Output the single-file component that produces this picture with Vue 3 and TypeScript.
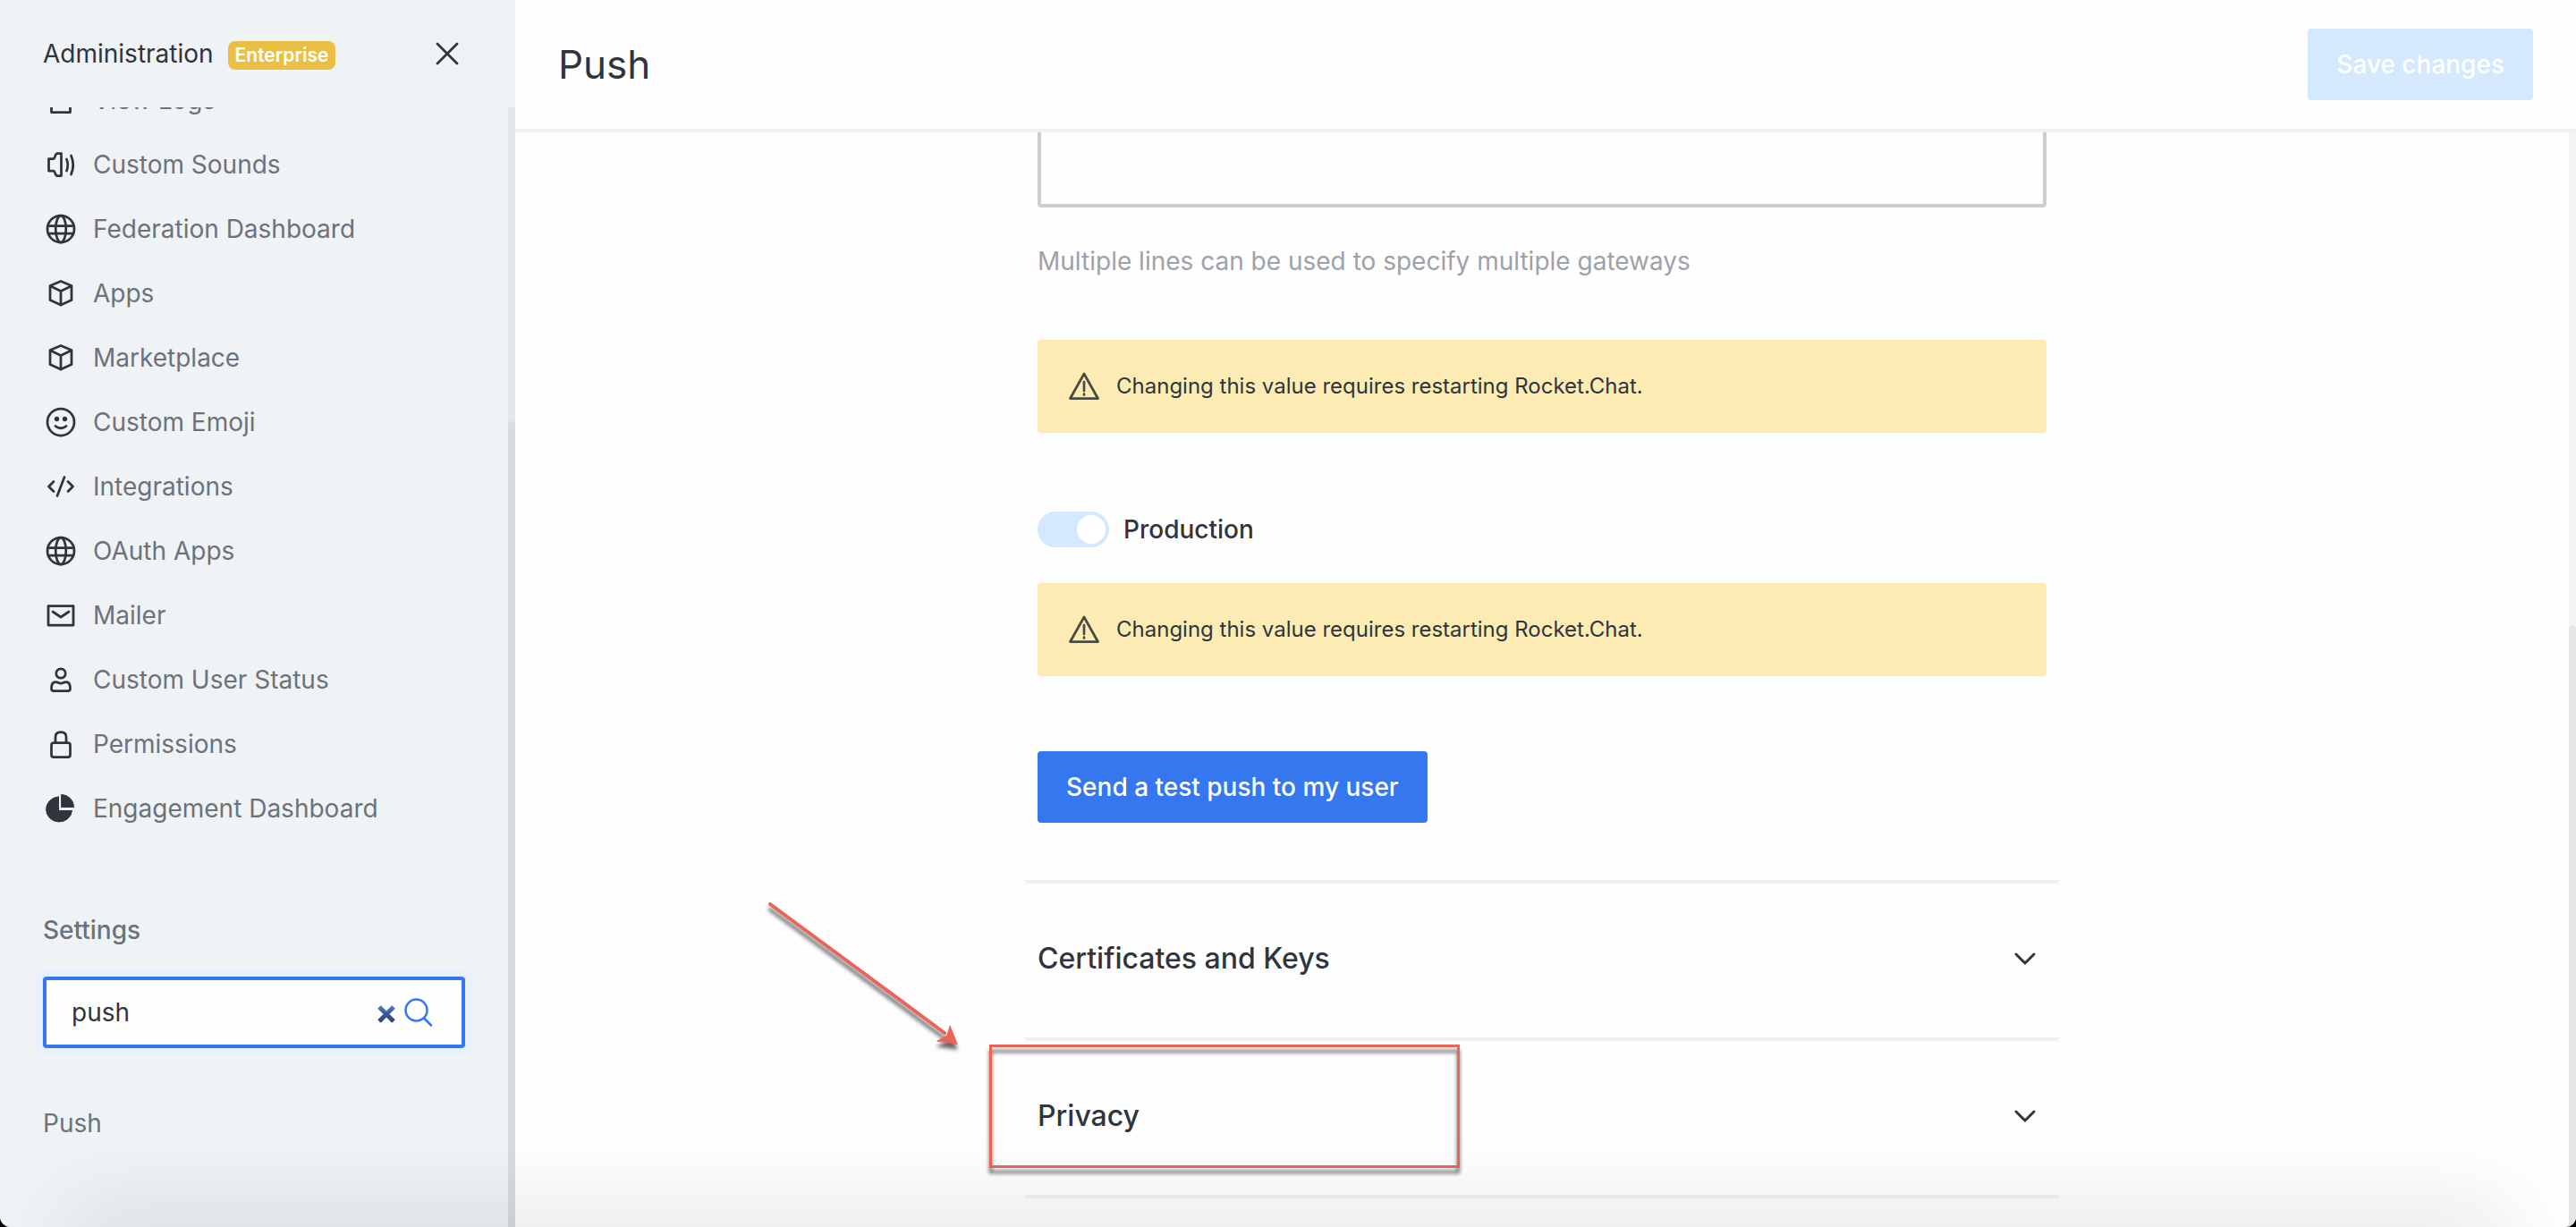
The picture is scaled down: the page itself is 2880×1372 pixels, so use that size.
<script setup lang="ts">
import { ref } from 'vue'

interface NavItem {
  label: string
  icon: string
}

const icons: Record<string, string> = {
  logs: '<rect x="9.500" y="7" width="21" height="26.500"/>',
  sound: '<path d="M16 7.500 H20.500 V32.500 H16 C13.500 32.500 13.500 27 12 27 H6.500 V13.500 H12 C13.500 13.500 13.500 7.500 16 7.500 Z"/><path d="M26.500 14 Q29 20.500 26.500 27"/><path d="M31.500 10 Q36 20.500 31.500 31"/>',
  globe: '<circle cx="20" cy="20" r="15"/><ellipse cx="20" cy="20" rx="5.800" ry="15"/><path d="M6 16.500 H34 M6 25 H34"/>',
  cube: '<path d="M20 6.500 L32 11.500 V27.500 L20 33 L8 27.500 V11.500 Z"/><path d="M8.500 12 L20 17.500 L31.500 12 M20 17.500 V33"/>',
  emoji: '<circle cx="20" cy="20" r="15"/><path d="M14 24.500 Q20 29 26 24.500"/><circle cx="15.500" cy="16.500" r="1.300"/><circle cx="24.500" cy="16.500" r="1.300"/>',
  code: '<path d="M12 14.500 L6.500 20 L12 25.500 M28 14.500 L33.500 20 L28 25.500 M24 9.500 L16 30.500"/>',
  mail: '<rect x="6" y="9.500" width="28" height="21.500"/><path d="M11 16 L20 22 L29 16"/>',
  user: '<circle cx="20" cy="13" r="5.200"/><path d="M14 22.500 C17 22.500 17 24 20 24 C23 24 23 22.500 26 22.500 C29 22.500 30.500 25.500 30.500 30 Q30.500 32.500 28 32.500 H12 Q9.500 32.500 9.500 30 C9.500 25.500 11 22.500 14 22.500 Z"/>',
  lock: '<rect x="9.500" y="18.500" width="21" height="16" rx="2.500"/><path d="M14 18.500 V12 Q14 6.500 20 6.500 Q26 6.500 26 12 V18.500"/>',
  pie: '<path class="solid" d="M17.500 7 V22.500 H32.500 A14.500 14 0 1 1 17.500 7 Z"/><path class="solid" d="M21 4.500 A14 14 0 0 1 34.500 18.500 H21 Z"/>',
}

const items: NavItem[] = [
  { label: 'View Logs', icon: 'logs' },
  { label: 'Custom Sounds', icon: 'sound' },
  { label: 'Federation Dashboard', icon: 'globe' },
  { label: 'Apps', icon: 'cube' },
  { label: 'Marketplace', icon: 'cube' },
  { label: 'Custom Emoji', icon: 'emoji' },
  { label: 'Integrations', icon: 'code' },
  { label: 'OAuth Apps', icon: 'globe' },
  { label: 'Mailer', icon: 'mail' },
  { label: 'Custom User Status', icon: 'user' },
  { label: 'Permissions', icon: 'lock' },
  { label: 'Engagement Dashboard', icon: 'pie' },
]

const query = ref('push')
const gateways = ref('')
const production = ref(true)
const restartNotice = 'Changing this value requires restarting Rocket.Chat.'
</script>

<template>
  <div class="app">
    <aside class="sidebar">
      <header class="side-head">
        <span class="side-title">Administration</span>
        <span class="badge">Enterprise</span>
        <button class="close" type="button" aria-label="Close">
          <svg viewBox="0 0 40 40"><path d="M9 9 L31 31 M31 9 L9 31" /></svg>
        </button>
      </header>
      <div class="side-scroll">
        <nav class="nav">
          <a v-for="item in items" :key="item.label" class="nav-item" href="#">
            <svg viewBox="0 0 40 40" aria-hidden="true" v-html="icons[item.icon]"></svg>
            <span>{{ item.label }}</span>
          </a>
        </nav>
        <section class="settings">
          <label class="settings-title" for="search">Settings</label>
          <div class="search">
            <input id="search" v-model="query" type="text" />
            <button class="clear" type="button" aria-label="Clear" @click="query = ''">
              <svg viewBox="0 0 20 20">
                <defs>
                  <linearGradient id="clear-fill" x1="0" y1="0" x2="0" y2="20" gradientUnits="userSpaceOnUse">
                    <stop offset="0" stop-color="#4a7ac8" />
                    <stop offset="1" stop-color="#2b3f68" />
                  </linearGradient>
                </defs>
                <path d="M2 2 L18 18 M18 2 L2 18" stroke="url(#clear-fill)" />
              </svg>
            </button>
            <svg class="lens" viewBox="0 0 40 40" aria-hidden="true">
              <circle cx="17.500" cy="17.500" r="12" />
              <path d="M26 26.500 L34 34.500" />
            </svg>
          </div>
          <a class="result" href="#">Push</a>
        </section>
        <div class="track side-track"><div class="thumb"></div></div>
      </div>
    </aside>

    <main class="main">
      <header class="main-head">
        <h1>Push</h1>
        <button class="btn save" type="button" disabled>Save changes</button>
      </header>
      <div class="main-scroll">
        <div class="content">
          <div class="fields">
            <textarea v-model="gateways" class="gateways" aria-label="Gateways"></textarea>
            <p class="hint">Multiple lines can be used to specify multiple gateways</p>
            <div class="callout">
              <svg viewBox="0 0 40 40" aria-hidden="true">
                <path d="M20 6 L35.500 33.500 H4.500 Z M20 15 V25 M20 28.500 V29.500" />
              </svg>
              <span>{{ restartNotice }}</span>
            </div>
            <div class="toggle-row">
              <input id="production" v-model="production" class="toggle" type="checkbox" disabled />
              <label for="production">Production</label>
            </div>
            <div class="callout">
              <svg viewBox="0 0 40 40" aria-hidden="true">
                <path d="M20 6 L35.500 33.500 H4.500 Z M20 15 V25 M20 28.500 V29.500" />
              </svg>
              <span>{{ restartNotice }}</span>
            </div>
            <button class="btn primary" type="button">Send a test push to my user</button>
          </div>
          <div class="accordion">
            <div class="section">
              <button class="section-head" type="button">
                <span>Certificates and Keys</span>
                <svg viewBox="0 0 40 40" aria-hidden="true"><path d="M10 15 L20 25 L30 15" /></svg>
              </button>
            </div>
            <div class="section">
              <button class="section-head" type="button">
                <span>Privacy</span>
                <svg viewBox="0 0 40 40" aria-hidden="true"><path d="M10 15 L20 25 L30 15" /></svg>
              </button>
              <div class="mark"></div>
              <svg class="arrow" viewBox="0 0 240 180" aria-hidden="true">
                <path d="M11 11 L206 155" />
                <polygon points="220,167 212,147 209,158 198,164" />
              </svg>
            </div>
          </div>
        </div>
        <div class="track main-track"><div class="thumb"></div></div>
      </div>
    </main>
    <div class="dock-shade"></div>
  </div>
</template>

<style>
html,
body {
  margin: 0;
  background: #000;
}
</style>

<style scoped>
.app {
  position: relative;
  display: flex;
  height: 100vh;
  overflow: hidden;
  border-radius: 0 0 12px 12px;
  background: #fefefe;
  color: #2f343d;
  font-family: Inter, "Liberation Sans", sans-serif;
  font-size: 28px;
  line-height: 40px;
}

* {
  box-sizing: border-box;
}

button,
input,
textarea {
  margin: 0;
  font: inherit;
  color: inherit;
}

a {
  text-decoration: none;
  color: inherit;
}

svg {
  display: block;
  flex: none;
  width: 40px;
  height: 40px;
  fill: none;
  stroke: #2f343d;
  stroke-width: 2.75;
  stroke-linecap: round;
  stroke-linejoin: round;
}

svg :deep(.solid) {
  fill: #2f343d;
  stroke-width: 1;
}

.sidebar {
  display: flex;
  flex: none;
  flex-direction: column;
  width: 576px;
  background: #f0f3f5;
}

.side-head {
  display: flex;
  flex: none;
  align-items: center;
  height: 120px;
  padding: 0 56px 0 48px;
}

.badge {
  margin: 4px 0 0 16px;
  padding: 0 8px;
  border-radius: 8px;
  background: #ebbf43;
  color: #fff;
  font-size: 21px;
  font-weight: 600;
  line-height: 32px;
}

.close {
  margin-left: auto;
  padding: 0;
  border: 0;
  background: none;
}

.side-scroll {
  position: relative;
  flex: 1;
  min-height: 0;
  overflow: hidden;
}

.nav {
  display: flex;
  flex-direction: column;
  margin-top: -44px;
}

.nav-item {
  display: flex;
  align-items: center;
  gap: 16px;
  height: 72px;
  padding: 0 48px;
  color: #6c727a;
}

.settings {
  display: flex;
  flex-direction: column;
  gap: 32px;
  padding: 80px 56px 0 48px;
}

.settings-title {
  color: #6c727a;
  font-weight: 500;
}

.search {
  display: flex;
  align-items: center;
  height: 80px;
  padding: 0 28px;
  border: 4px solid #3477f0;
  border-radius: 4px;
  background: #fefefe;
  box-shadow: 0 0 0 8px #e8f1fc;
}

.search input {
  flex: 1;
  min-width: 0;
  padding: 0;
  border: 0;
  outline: 0;
  background: none;
}

.clear {
  margin: 4px 6px 0 0;
  padding: 0;
  border: 0;
  background: none;
}

.clear svg {
  width: 20px;
  height: 20px;
  stroke-width: 5;
  stroke-linecap: butt;
}

.lens {
  stroke: #3477f0;
  stroke-width: 2.5;
}

.result {
  margin-top: 32px;
  color: #6c727a;
}

.track {
  position: absolute;
  top: 0;
  right: 0;
  bottom: 0;
  display: flex;
  flex-direction: column;
  justify-content: flex-end;
  width: 8px;
}

.side-track {
  background: #e4e8ea;
}

.side-track .thumb {
  height: 72%;
  border-radius: 4px 4px 0 0;
  background: #d8dcdf;
}

.main-track {
  background: #f2f3f5;
}

.main-track .thumb {
  height: 55%;
  border-radius: 4px 4px 0 0;
  background: #e5e7e6;
}

.main {
  display: flex;
  flex: 1;
  flex-direction: column;
  min-width: 0;
}

.main-head {
  display: flex;
  flex: none;
  align-items: center;
  justify-content: space-between;
  height: 148px;
  padding: 0 48px;
  border-bottom: 4px solid #eff2f4;
}

h1 {
  margin: 0;
  font-size: 44px;
  font-weight: 400;
  line-height: 64px;
}

.btn {
  height: 80px;
  padding: 0 32px;
  border: 0;
  border-radius: 4px;
  color: #fff;
  font-weight: 500;
}

.save {
  background: #d4e9fd;
}

.primary {
  margin-top: 84px;
  background: #3577ee;
}

.main-scroll {
  position: relative;
  flex: 1;
  min-height: 0;
  padding-right: 8px;
  overflow: hidden;
}

.content {
  max-width: 1160px;
  margin: -116px auto 0;
}

.fields {
  display: flex;
  flex-direction: column;
  align-items: flex-start;
  padding: 0 16px 64px;
}

.gateways {
  display: block;
  width: 100%;
  height: 200px;
  border: 4px solid #cbced1;
  border-radius: 4px;
  outline: 0;
  background: none;
  resize: none;
}

.hint {
  margin: 40px 0 68px;
  color: #9ea2a8;
}

.callout {
  display: flex;
  align-items: center;
  gap: 16px;
  width: 100%;
  height: 104px;
  padding: 0 32px;
  border-radius: 4px;
  background: #fcecb3;
  font-size: 24px;
}

.callout svg {
  stroke: #4a4a44;
}

.toggle-row {
  display: flex;
  align-items: center;
  gap: 16px;
  margin: 88px 0 40px;
  font-weight: 500;
}

.toggle {
  display: flex;
  justify-content: flex-end;
  width: 80px;
  height: 40px;
  padding: 4px;
  border-radius: 20px;
  background: #d4e9fd;
  appearance: none;
}

.toggle::before {
  width: 32px;
  height: 32px;
  border-radius: 50%;
  background: #fff;
  content: "";
}

.section {
  position: relative;
  border: 4px solid transparent;
  border-top-color: #eef0f1;
  border-bottom: 0;
}

.section:last-child {
  border-bottom: 4px solid #eef0f1;
}

.section-head {
  display: flex;
  align-items: center;
  justify-content: space-between;
  width: 100%;
  height: 172px;
  padding: 0 16px 4px 12px;
  border: 0;
  background: none;
  font-size: 32px;
  font-weight: 500;
}

.section-head svg {
  stroke-width: 3;
}

.mark {
  position: absolute;
  top: 4px;
  left: -42px;
  width: 526px;
  height: 138px;
  border: 3px solid #e96557;
  filter: drop-shadow(0 6px 2px rgba(0, 0, 0, 0.6));
  pointer-events: none;
}

.arrow {
  position: absolute;
  top: -164px;
  left: -298px;
  width: 240px;
  height: 180px;
  stroke: #e96557;
  stroke-width: 4;
  filter: drop-shadow(0 6px 2px rgba(0, 0, 0, 0.6));
  pointer-events: none;
}

.arrow polygon {
  fill: #e96557;
  stroke-width: 1;
  stroke-linejoin: miter;
}

.dock-shade {
  position: absolute;
  right: 90px;
  bottom: -40px;
  left: 90px;
  height: 40px;
  box-shadow: 0 0 100px 10px rgba(20, 20, 30, 0.14);
  pointer-events: none;
}
</style>
